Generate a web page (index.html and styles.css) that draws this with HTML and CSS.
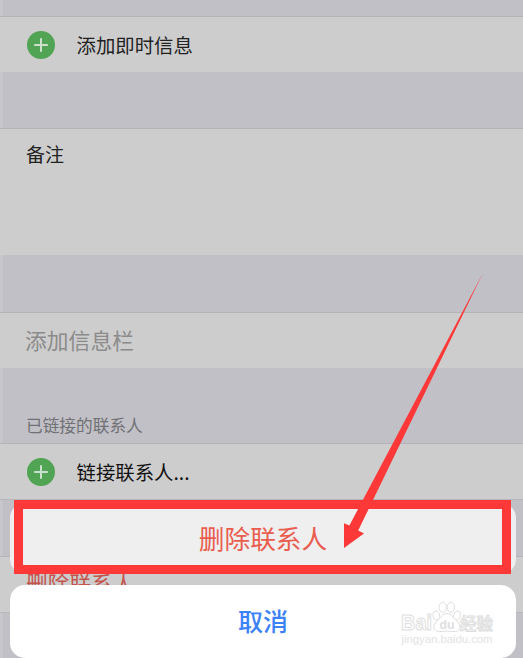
FILE: index.html
```
<!DOCTYPE html>
<html lang="zh-CN">
<head>
    <meta charset="UTF-8">
    <meta name="viewport" content="width=device-width, initial-scale=1.0">
    <title>编辑联系人</title>
    <link rel="stylesheet" href="styles.css">
</head>
<body>
    <div class="screen">
        <div class="contact-form">
            <div class="gap gap-top"></div>
            <div class="row">
                <svg class="plus" viewBox="0 0 28 28">
                    <circle cx="14" cy="14" r="14"/>
                    <path d="M14 7.2v13.6M7.2 14h13.6"/>
                </svg>
                <span class="label">添加即时信息</span>
            </div>
            <div class="gap"></div>
            <div class="row notes"><span>备注</span></div>
            <div class="gap gap-notes"></div>
            <div class="row field"><span>添加信息栏</span></div>
            <div class="gap section-title"><span>已链接的联系人</span></div>
            <div class="row">
                <svg class="plus" viewBox="0 0 28 28">
                    <circle cx="14" cy="14" r="14"/>
                    <path d="M14 7.2v13.6M7.2 14h13.6"/>
                </svg>
                <span class="label link-label">链接联系人...</span>
            </div>
            <div class="gap gap-line"></div>
            <div class="row delete-row"><span>删除联系人</span></div>
            <div class="gap gap-line gap-bottom"></div>
        </div>

        <div class="action-sheet">
            <div class="sheet-button delete"><span>删除联系人</span></div>
            <div class="sheet-button cancel"><span>取消</span></div>
        </div>

        <div class="highlight"></div>
        <svg class="arrow" viewBox="0 0 140 276">
            <path d="M139 0L14.2 257.5 20 260.5 0 275V250.3L5.4 252.4Z"/>
        </svg>

        <svg class="watermark" viewBox="0 0 96 50">
            <g class="outline">
                <text x="1" y="32" class="brand" textLength="31" lengthAdjust="spacingAndGlyphs">Bai</text>
                <ellipse cx="36.3" cy="17.5" rx="3.3" ry="4.5" transform="rotate(-15 36.3 17.5)"/>
                <ellipse cx="42.7" cy="9.3" rx="3.7" ry="5"/>
                <ellipse cx="50.8" cy="9.3" rx="3.7" ry="5"/>
                <ellipse cx="57" cy="17.5" rx="3.3" ry="4.5" transform="rotate(15 57 17.5)"/>
                <path d="M47 15.5C42 15.5 41 20 37 23 31 28.5 34 34.5 41 33.5Q47 32.5 53 33.5C60 34.5 62.5 28.5 57 23 53 20 52 15.5 47 15.5Z"/>
                <text x="60" y="32" class="product" textLength="33" lengthAdjust="spacingAndGlyphs">经验</text>
            </g>
            <text x="39.5" y="31" class="du" textLength="15" lengthAdjust="spacingAndGlyphs">du</text>
            <text x="1.5" y="44.5" class="url" textLength="91" lengthAdjust="spacingAndGlyphs">jingyan.baidu.com</text>
        </svg>
    </div>
</body>
</html>
```
FILE: styles.css
```
* {
    margin: 0;
    padding: 0;
    box-sizing: border-box;
}

body {
    background-color: #c1c0c6;
    font-family: "Noto Sans CJK SC", sans-serif;
    overflow: hidden;
}

.screen {
    position: relative;
    width: 523px;
    height: 658px;
    overflow: hidden;
}

.contact-form {
    display: flex;
    flex-direction: column;
    height: 658px;
    box-shadow: inset 3px 0 0 rgba(255, 255, 255, 0.1);
}

.gap {
    height: 57px;
    flex-shrink: 0;
    border-bottom: 1px solid #b4b3b8;
}

.gap-top {
    height: 17px;
}

.gap-notes {
    height: 58px;
}

.gap-line {
    height: 58px;
    border-top: 1px solid #b8b7bb;
}

.gap-bottom {
    height: 46px;
    border-bottom: none;
}

.row {
    display: flex;
    align-items: center;
    height: 55px;
    flex-shrink: 0;
    padding-left: 26px;
    background-color: #cdcdcd;
    color: #222;
    font-size: 19.4px;
    line-height: 28px;
    white-space: nowrap;
}

.plus {
    width: 28px;
    height: 28px;
    margin-left: 0.5px;
    margin-right: 22px;
}

.plus circle {
    fill: #50a454;
}

.plus path {
    fill: none;
    stroke: #cde0cd;
    stroke-width: 2;
}

.link-label {
    color: #111;
}

.notes {
    height: 126px;
    align-items: flex-start;
    padding-top: 11px;
    font-size: 19px;
}

.field {
    padding-left: 25px;
    padding-bottom: 2px;
    color: #8b8b8b;
    font-size: 21.8px;
}

.section-title {
    display: flex;
    align-items: flex-end;
    height: 76px;
    padding: 0 0 5px 26px;
    color: #707075;
    font-size: 16.7px;
    line-height: 26px;
}

.delete-row {
    padding-bottom: 4px;
    color: #c4534b;
    font-size: 21.7px;
}

.action-sheet {
    position: absolute;
    left: 10px;
    right: 7px;
    top: 503px;
    display: flex;
    flex-direction: column;
    gap: 11px;
}

.sheet-button {
    display: flex;
    align-items: center;
    justify-content: center;
    border-radius: 15px;
    font-size: 25.7px;
    line-height: 36px;
}

.delete {
    height: 71px;
    padding-bottom: 2px;
    background-color: #efeff0;
    color: #ea5c4d;
}

.cancel {
    height: 73px;
    padding-bottom: 4px;
    background-color: #fff;
    color: #3b82f7;
    font-size: 25px;
    font-weight: 500;
}

/* marker box round the delete button */
.highlight {
    position: absolute;
    left: 14px;
    top: 500px;
    width: 497px;
    height: 74px;
    border: 9px solid #fc3838;
}

.arrow {
    position: absolute;
    left: 344px;
    top: 273px;
    width: 140px;
    height: 276px;
    fill: #fc3838;
}

.watermark {
    position: absolute;
    left: 400px;
    top: 598px;
    width: 96px;
    height: 50px;
    font-family: "Liberation Sans", "Noto Sans CJK SC", sans-serif;
    font-weight: bold;
}

.outline {
    fill: #fff;
    stroke: #dedede;
    stroke-width: 1;
}

.brand {
    font-size: 22px;
}

.du {
    font-size: 13px;
    fill: #dedede;
}

.product {
    font-size: 17px;
    font-weight: 500;
}

.url {
    font-size: 11px;
    font-weight: normal;
    fill: #e2e2e2;
}
```
